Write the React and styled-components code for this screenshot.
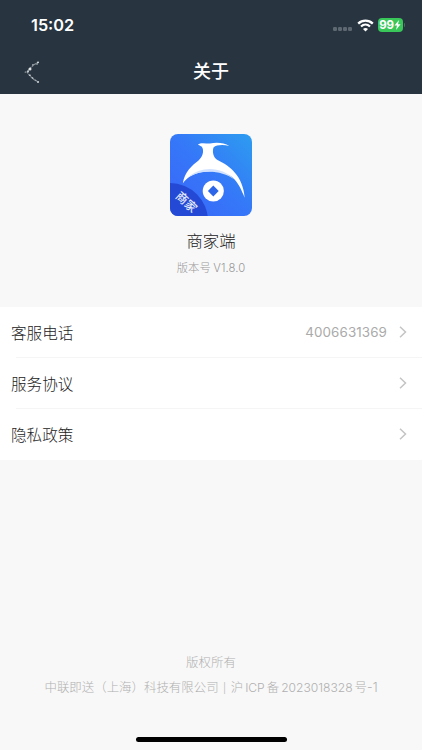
import styled, { createGlobalStyle } from "styled-components";

const GlobalStyle = createGlobalStyle`
  * {
    box-sizing: border-box;
  }
  body {
    margin: 0;
    background: #f8f8f8;
    font-family: Inter, "Noto Sans CJK SC", sans-serif;
  }
`;

const Page = styled.div`
  display: flex;
  flex-direction: column;
  height: 750px;
  overflow: hidden;
  background: #f8f8f8;
`;

const Header = styled.header`
  height: 94px;
  background: #283541;
  color: #fff;
`;

const StatusBar = styled.div`
  display: flex;
  align-items: center;
  justify-content: space-between;
  height: 48px;
  padding: 2px 17px 0 31px;
`;

const Time = styled.span`
  font-size: 16.3px;
  font-weight: 600;
  line-height: 20px;
`;

const StatusIcons = styled.div`
  display: flex;
  align-items: center;
`;

const Dots = styled.div`
  display: flex;
  gap: 1.5px;
  margin: 8px 5px 0 0;
`;

const Dot = styled.i`
  width: 3.5px;
  height: 3.5px;
  border-radius: 1.2px;
  background: #5d6872;
`;

const Battery = styled.div`
  display: flex;
  align-items: center;
  justify-content: center;
  width: 25px;
  height: 14px;
  margin-left: 4px;
  border-radius: 4px;
  background: #39c759;
  font-size: 11.5px;
  font-weight: 700;
  letter-spacing: -0.2px;
`;

const BatteryCap = styled.i`
  width: 1.5px;
  height: 4px;
  margin-left: 1px;
  border-radius: 0 2px 2px 0;
  background: #56616b;
`;

const NavBar = styled.div`
  display: grid;
  grid-template-columns: 60px 1fr 60px;
  align-items: center;
  height: 46px;
  padding-top: 2px;
`;

const BackButton = styled.button`
  display: flex;
  padding: 0 0 0 24px;
  border: 0;
  background: none;
`;

const Title = styled.h1`
  margin: 0;
  font-size: 18px;
  font-weight: 500;
  line-height: 26px;
  text-align: center;
`;

const Brand = styled.section`
  display: flex;
  flex-direction: column;
  align-items: center;
  height: 213px;
  padding-top: 40px;
`;

const AppName = styled.div`
  margin-top: 13px;
  color: #222;
  font-size: 16.4px;
  font-weight: 300;
  line-height: 24px;
`;

const Version = styled.div`
  margin-top: 6px;
  color: #999;
  font-size: 11.3px;
  font-weight: 300;
  letter-spacing: 0.1px;
  line-height: 18px;
  word-spacing: -1px;
`;

const List = styled.ul`
  margin: 0;
  padding: 0;
  background: #fff;
  list-style: none;
`;

const Row = styled.li`
  display: flex;
  align-items: center;
  height: 51px;
  padding: 0 15px 2px 11px;
  background: ${(props) =>
    props.$last
      ? "none"
      : "linear-gradient(#f5f5f5, #f5f5f5) 16px 100% / 100% 1px no-repeat"};
`;

const Label = styled.span`
  flex: 1;
  color: #222;
  font-size: 15.6px;
  font-weight: 300;
`;

const Value = styled.span`
  margin-right: 12px;
  color: #aaa;
  font-size: 13.4px;
  letter-spacing: 0.1px;
`;

const Footer = styled.footer`
  display: flex;
  flex-direction: column;
  align-items: center;
  margin-top: auto;
  color: #b0b0b0;
  font-size: 12.45px;
  font-weight: 300;
  line-height: 25px;
  white-space: nowrap;
`;

const Latin = styled.span`
  margin: 0 2px;
  font-size: 12.1px;
`;

const Divider = styled.span`
  font-size: 10px;
  margin: 0 1px;
`;

const HomeIndicator = styled.div`
  width: 151px;
  height: 5px;
  margin: 36px 0 8.5px;
  border-radius: 3px;
  background: #000;
`;

const rows = [
  { label: "客服电话", value: "4006631369" },
  { label: "服务协议" },
  { label: "隐私政策" },
];

function WifiIcon() {
  return (
    <svg width="17" height="13" viewBox="0 0 17 13" fill="none">
      <path d="M1.2 4.6c4.1-4 10.500-4 14.600 0" stroke="#fff" strokeWidth="2.300" />
      <path d="M4 7.500c2.600-2.500 6.400-2.500 9 0" stroke="#fff" strokeWidth="2.200" />
      <path d="M8.500 12.500 6 10c1.400-1.200 3.600-1.200 5 0Z" fill="#fff" />
    </svg>
  );
}

function BackIcon() {
  return (
    <svg width="16" height="24" viewBox="0 0 16 24" fill="none">
      <path d="M14.500 2 9 5.500 5.500 9 3 12l3 4 4 3.500 4.500 2.500" stroke="#8b949b" strokeWidth="1.200" strokeDasharray="2.200 0.800" />
      <g fill="#dfe3e6">
        <circle cx="14" cy="2.300" r="0.900" />
        <circle cx="13" cy="4" r="0.700" />
        <circle cx="9" cy="4.700" r="0.700" />
        <circle cx="6" cy="9" r="1.500" />
        <circle cx="4" cy="11.500" r="0.900" />
        <circle cx="1.300" cy="12" r="0.600" />
        <circle cx="6" cy="15.300" r="0.800" />
        <circle cx="8.500" cy="18" r="0.800" />
        <circle cx="11" cy="20" r="0.600" />
        <circle cx="14" cy="22" r="0.900" />
      </g>
    </svg>
  );
}

function Chevron() {
  return (
    <svg width="8" height="12" viewBox="0 0 8 12" fill="none">
      <path d="m1 .8 5.500 5.200L1 11.200" stroke="#c4c4c4" strokeWidth="1.500" />
    </svg>
  );
}

const BadgeText = styled.text`
  fill: #e4eaff;
  font-size: 12px;
  font-weight: 500;
  text-anchor: middle;
`;

function Logo() {
  return (
    <svg width="82" height="82" viewBox="0 0 82 82">
      <defs>
        <linearGradient id="sky" x1="0" y1="1" x2="1" y2="0">
          <stop offset="0" stopColor="#3b66fa" />
          <stop offset="0.500" stopColor="#3577f8" />
          <stop offset="1" stopColor="#2d9df0" />
        </linearGradient>
        <clipPath id="tile">
          <rect width="82" height="82" rx="8" />
        </clipPath>
      </defs>
      <g clipPath="url(#tile)">
        <rect width="82" height="82" fill="url(#sky)" />
        <path
          d="M28 10.500C30.500 8.500 35 9.500 40 9.600C46 8 54 8.500 59.300 12C53 10.500 46.500 10.800 43.500 13.500C42 18 43.500 23.500 47.500 26C60 32 73 42 74.700 63.700C71.500 56 68 48 62 43C51 35.500 31 35.500 20 42.500C17 44.300 14.500 47 12.800 49.500C14.500 38 22 31.500 28.500 26.500C32.500 23 34 17.500 32.500 14C31.500 11.500 29.500 12 28 10.500Z"
          fill="#fff"
        />
        <path d="M18.500 43C31 32 51 32 64.500 45.500C51 35.500 31 35.500 18.500 43Z" fill="#d3e3ff" />
        <circle cx="43.300" cy="57" r="10.600" fill="#fff" />
        <path d="m43.300 51.600 5.400 5.400-5.400 5.400-5.400-5.400Z" fill="#2c65e8" />
        <circle cx="0" cy="87" r="38" fill="#2449d4" />
        <BadgeText transform="translate(13.500 71.300) rotate(43)">商家</BadgeText>
      </g>
    </svg>
  );
}

function App() {
  return (
    <Page>
      <GlobalStyle />
      <Header>
        <StatusBar>
          <Time>15:02</Time>
          <StatusIcons>
            <Dots>
              <Dot />
              <Dot />
              <Dot />
              <Dot />
            </Dots>
            <WifiIcon />
            <Battery>
              99
              <svg width="7" height="10" viewBox="0 0 7 10">
                <path d="M5 0 .5 5.600H3L2 10l4.600-5.800H4Z" fill="#fff" />
              </svg>
            </Battery>
            <BatteryCap />
          </StatusIcons>
        </StatusBar>
        <NavBar>
          <BackButton aria-label="返回">
            <BackIcon />
          </BackButton>
          <Title>关于</Title>
        </NavBar>
      </Header>
      <Brand>
        <Logo />
        <AppName>商家端</AppName>
        <Version>版本号 V1.8.0</Version>
      </Brand>
      <List>
        {rows.map((row, index) => (
          <Row key={row.label} $last={index === rows.length - 1}>
            <Label>{row.label}</Label>
            {row.value && <Value>{row.value}</Value>}
            <Chevron />
          </Row>
        ))}
      </List>
      <Footer>
        <div>版权所有</div>
        <div>
          中联即送（上海）科技有限公司 <Divider>|</Divider> 沪<Latin>ICP</Latin>备
          <Latin>2023018328</Latin>号-1
        </div>
        <HomeIndicator />
      </Footer>
    </Page>
  );
}

export default App;
